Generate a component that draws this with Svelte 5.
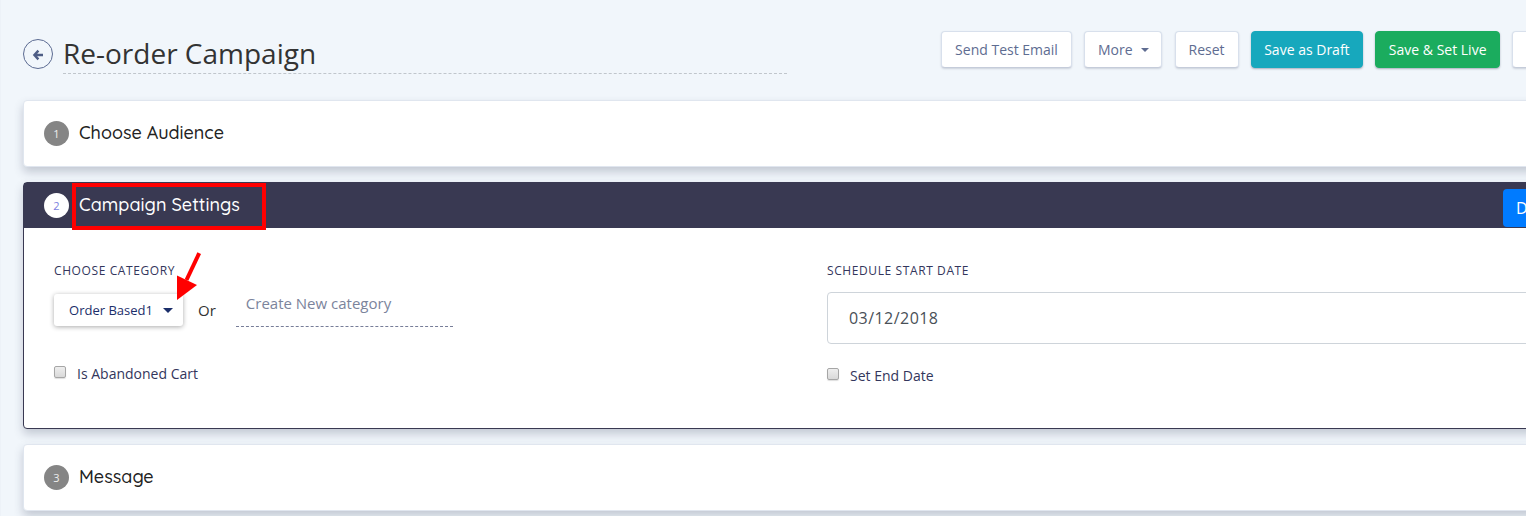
<script>
  const actions = [
    { label: 'Send Test Email', width: 131 },
    { label: 'More', width: 78, caret: true },
    { label: 'Reset', width: 64 },
    { label: 'Save as Draft', width: 112, tone: 'info' },
    { label: 'Save & Set Live', width: 125, tone: 'success' },
    { label: '', width: 80 }
  ];
</script>

<main>
  <header>
    <a class="back" href="#back" aria-label="Back">
      <svg width="12" height="12" viewBox="0 0 12 12" fill="none" stroke="#4e5d85" stroke-width="2.4">
        <path d="M6.4 1.6 2.4 6l4 4.4M2.6 6H11" />
      </svg>
    </a>
    <h1><span>Re-order Campaign</span></h1>
    <nav>
      {#each actions as action}
        <button class={action.tone ?? 'plain'} style="width:{action.width}px">
          {action.label}{#if action.caret}<i></i>{/if}
        </button>
      {/each}
    </nav>
  </header>

  <section class="card folded">
    <b class="step">1</b>
    <h2 class="audience">Choose Audience</h2>
  </section>

  <section class="card open">
    <div class="bar">
      <b class="step">2</b>
      <h2 class="settings">Campaign Settings</h2>
      <span class="mark"></span>
      <button class="done">Done</button>
    </div>
    <div class="body">
      <div class="category">
        <h3>CHOOSE CATEGORY</h3>
        <div class="choice">
          <button class="select">Order Based1<i></i></button>
          <span class="or">Or</span>
          <span class="create">Create New category</span>
        </div>
        <div class="check"><i class="box"></i><span>Is Abandoned Cart</span></div>
      </div>
      <div class="schedule">
        <h3>SCHEDULE START DATE</h3>
        <div class="date">03/12/2018</div>
        <div class="check"><i class="box"></i><span>Set End Date</span></div>
      </div>
    </div>
    <svg class="arrow" width="28" height="50" viewBox="0 0 28 50">
      <path d="M23.2 1.2 10.5 28" stroke="#f00" stroke-width="4" />
      <path d="M1 23.5 21 33 1 48z" fill="#f00" />
    </svg>
  </section>

  <section class="card folded">
    <b class="step">3</b>
    <h2 class="message">Message</h2>
  </section>
</main>

<style>
  :global(body) { overflow: hidden; }
  main {
    box-sizing: border-box;
    width: 1526px;
    height: 516px;
    overflow: hidden;
    padding-left: 23px;
    background: #f1f6fb;
    box-shadow: inset 1px 0 #edf2f8;
    font-family: "Open Sans", sans-serif;
    color: #33365c;
  }
  h1, h2, h3 { margin: 0; font-weight: 400; white-space: nowrap; }
  button { font-family: inherit; box-sizing: border-box; padding: 0; flex: none; }
  header { display: flex; height: 100px; }
  .back {
    box-sizing: border-box;
    flex: none;
    width: 30px;
    height: 30px;
    margin-top: 39px;
    border: 1px solid #5c6b92;
    border-radius: 50%;
    display: flex;
    align-items: center;
    justify-content: center;
  }
  .back svg { margin-top: 2px; }
  h1 {
    box-sizing: border-box;
    flex: none;
    width: 724px;
    height: 40px;
    margin: 34px 0 0 10px;
    border-bottom: 1px dashed #c0c6cc;
    font-size: 28px;
    line-height: 39px;
    color: #333;
  }
  nav { display: flex; gap: 12.3px; margin: 31px 0 0 154px; }
  nav button {
    height: 37px;
    border: 1px solid #d8e0ec;
    border-bottom-color: #c5ccda;
    border-radius: 4px;
    background: #fff;
    box-shadow: 0 1px 2px #2d375530;
    color: #5e6c91;
    font-size: 14px;
    line-height: 34px;
    white-space: nowrap;
  }
  nav .info { background: #17a8bd; border-color: #17a8bd; color: #fff; box-shadow: 0 1px 2px #2d375560; }
  nav .success { background: #1bac5e; border-color: #1bac5e; color: #fff; box-shadow: 0 1px 2px #2d375560; }
  nav i, .select i {
    display: inline-block;
    border: 4px solid transparent;
    border-top-color: currentColor;
    border-bottom: 0;
    margin-left: 8px;
    vertical-align: 3px;
  }
  .card {
    position: relative;
    box-sizing: border-box;
    width: 1540px;
    border: 1px solid #e0e6ef;
    border-radius: 4px;
    background: #fff;
    box-shadow: 0 5px 10px #2d37553c;
  }
  .folded { display: flex; height: 67px; padding: 20px 0 0 20px; }
  .step {
    flex: none;
    width: 25px;
    height: 25px;
    border-radius: 50%;
    background: #858585;
    color: #eee;
    font-size: 11px;
    font-weight: 400;
    line-height: 26px;
    text-align: center;
  }
  h2 {
    margin-left: 10px;
    font-family: Quicksand, Lato, sans-serif;
    font-size: 18px;
    font-weight: 500;
    line-height: 24px;
    color: #222;
  }
  .open { height: 247px; margin: 15px 0; border-color: #393952; }
  .bar { display: flex; position: relative; height: 45px; background: #393952; padding-left: 20px; }
  .bar .step { margin-top: 10px; background: #fff; color: #7b7fe0; }
  .bar h2 { margin-top: 10px; color: #fff; letter-spacing: .05px; }
  .mark {
    position: absolute;
    box-sizing: border-box;
    left: 48px;
    top: 0;
    width: 194px;
    height: 47px;
    border: 4px solid #f00;
  }
  .done {
    width: 70px;
    height: 38px;
    margin: 6px -11px 0 auto;
    border: 0;
    border-radius: 4px;
    background: #007bff;
    color: #fff;
    font-size: 16px;
    text-align: left;
    padding-left: 13px;
  }
  .body { display: grid; grid-template-columns: 773px 1fr; padding: 33px 0 0 30px; }
  h3 { font-size: 12px; line-height: 20px; letter-spacing: .6px; }
  .choice { display: flex; height: 51px; margin-top: 12px; }
  .select {
    width: 129px;
    height: 32px;
    margin-top: 1px;
    padding-left: 5px;
    border: 0;
    border-radius: 3px;
    background: #fff;
    box-shadow: 0 1px 5px #0005;
    font-size: 13px;
    color: #1b2e6a;
    white-space: nowrap;
  }
  .select i { border-width: 5px 5px 0; margin-left: 10px; vertical-align: 2px; }
  .or { margin: 6px 0 0 15px; font-size: 15px; line-height: 22px; color: #333; }
  .create {
    box-sizing: border-box;
    width: 217px;
    height: 34px;
    margin-left: 20px;
    padding-left: 10px;
    border-bottom: 1px dashed #777d98;
    font-size: 15px;
    line-height: 20px;
    color: #7b849c;
  }
  .check { display: flex; align-items: center; font-size: 14px; line-height: 20px; margin-top: 20px; }
  .box {
    box-sizing: border-box;
    width: 12px;
    height: 12px;
    margin: -5px 11px 0 0;
    border: 1px solid #a6a6a6;
    border-radius: 2px;
    background: linear-gradient(#eee, #d9d9d9);
    box-shadow: 0 1px 1px #0002;
  }
  .date {
    box-sizing: border-box;
    height: 52px;
    margin-top: 11px;
    padding-left: 21px;
    border: 1px solid #ced4da;
    border-radius: 4px;
    font-size: 16px;
    line-height: 50px;
    letter-spacing: .45px;
    color: #495057;
  }
  .schedule .check { margin-top: 22px; }
  .arrow { position: absolute; left: 152px; top: 69px; }
</style>
